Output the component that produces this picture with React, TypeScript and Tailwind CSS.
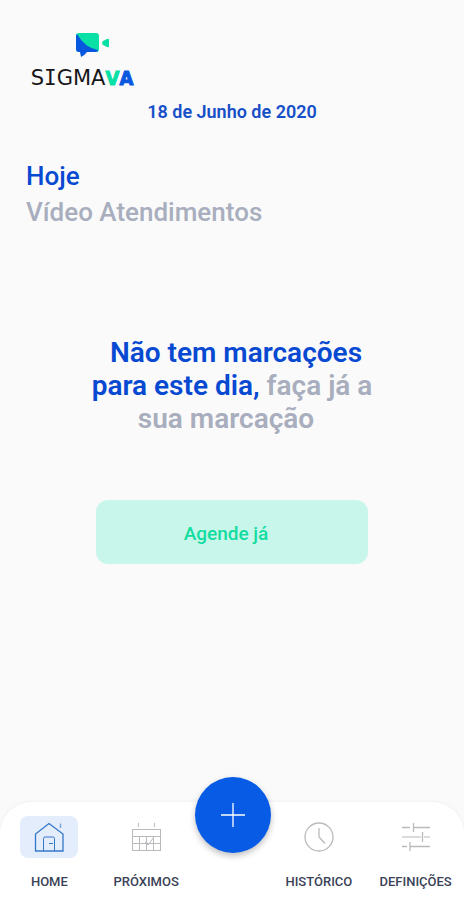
import type { ReactNode } from "react";

function Logo() {
  return (
    <div className="flex w-[108px] flex-col items-center" role="img" aria-label="Sigmava">
      <svg viewBox="0 0 36 26" className="ml-[22px] h-[26px] w-9" aria-hidden="true">
        <rect x="1" y="1" width="23" height="19" rx="3" fill="#08e0a5" />
        <path d="M2 2Q1 3 1 4V17Q1 20 4 20H5L6 25Q9 24 12 20H21Q23 20 23 18Q10 16 2 2Z" fill="#0757df" />
        <path d="M34 8V14Q34 16 32 15L28 13Q26 11 28 9L32 7Q34 6 34 8Z" fill="#08e0a5" />
      </svg>
      <div className="mt-2 flex items-baseline font-['DejaVu_Sans',sans-serif] text-[21px] leading-[24px] text-[#171719]">
        <span>S</span>
        <span className="font-['DejaVu_Sans_Mono',monospace]">I</span>
        <span>GMA</span>
        <span className="flex font-['DejaVu_Sans_Condensed','DejaVu_Sans',sans-serif] text-[20px] font-bold">
          <span className="text-[#08e0a5] [-webkit-text-stroke:1px_#08e0a5]">V</span>
          <span className="text-[#0757df] [-webkit-text-stroke:1px_#0757df]">A</span>
        </span>
      </div>
    </div>
  );
}

function HomeIcon() {
  return (
    <svg viewBox="0 0 32 32" className="size-8" fill="none" stroke="#3478c9" aria-hidden="true">
      <path d="M2.5 30V13L16 2.5L30 13V30Z" strokeWidth="1.3" />
      <path d="M10.5 30V17.5Q10.5 16 12 16H20Q21.5 16 21.5 17.5V30M16 22.5H20" />
      <path d="M27.5 2.5V7" strokeWidth="1.5" opacity=".6" />
    </svg>
  );
}

function CalendarIcon() {
  return (
    <svg viewBox="0 0 32 32" className="size-8" fill="none" stroke="#b8babd" aria-hidden="true">
      <rect x="2.5" y="8.5" width="28" height="21" />
      <path d="M2.5 15.5H30.5M2.5 22.5H30.5M9.5 15.5V29M16.5 15.5V29M23.5 15.5V29M8.5 2V6M24.5 2V6M15 21L18 24L24 16" />
    </svg>
  );
}

function ClockIcon() {
  return (
    <svg viewBox="0 0 32 32" className="size-8" fill="none" stroke="#b8babd" strokeWidth="1.3" aria-hidden="true">
      <circle cx="16" cy="16" r="14" />
      <path d="M16 7V16L22 22.5" />
    </svg>
  );
}

function SlidersIcon() {
  return (
    <svg viewBox="0 0 32 32" className="size-8" fill="none" stroke="#b8babd" strokeWidth="1.3" aria-hidden="true">
      <path d="M2 6.5H10M13.5 6.5H30M13.5 2V11" />
      <path d="M2 16H21M24 16H30" opacity=".7" />
      <path d="M22.5 11V21M2 25.5H7M10 25.5H30M10 21V30" />
    </svg>
  );
}

function NavItem({ label, icon, active = false }: { label: string; icon: ReactNode; active?: boolean }) {
  return (
    <a
      href="#"
      aria-current={active ? "page" : undefined}
      className="flex min-w-0 flex-1 flex-col items-center gap-4 text-[13px] leading-4 font-medium text-[#3a4257]"
    >
      <span className={`flex h-[42px] w-[58px] items-center justify-center rounded-lg ${active ? "bg-[#e4edfc]" : ""}`}>
        {icon}
      </span>
      <span>{label}</span>
    </a>
  );
}

export default function App() {
  return (
    <div className="flex min-h-screen flex-col bg-[#fafafa] font-[Roboto,sans-serif]">
      <header className="px-7 pt-8">
        <Logo />
        <p className="mt-3 text-center text-lg leading-5 font-semibold text-[#174fc8]">18 de Junho de 2020</p>
      </header>

      <main className="flex flex-1 flex-col px-[26px] pt-9">
        <h1 className="text-[26px] leading-9 font-medium">
          <span className="block text-[#0849d2]">Hoje</span>
          <span className="block text-[#a8aebd]">Vídeo Atendimentos</span>
        </h1>

        <section className="mt-[106px] flex flex-col items-center">
          <p className="text-center text-[28px] leading-[33px] font-semibold text-[#a8aebd]">
            <span className="ml-2 text-[#0849d2]">Não tem marcações</span>
            <br />
            <span className="text-[#0849d2]">para este dia,</span> faça já a
            <br />
            <span className="mr-3">sua marcação</span>
          </p>
          <button
            type="button"
            className="mt-[65px] h-16 w-full max-w-[272px] rounded-xl bg-[#c9f6ea] pt-1 pr-3 text-[19px] font-medium text-[#12dda0]"
          >
            Agende já
          </button>
        </section>
      </main>

      <nav className="flex rounded-t-[32px] bg-white pt-[14px] pb-[10px] pl-px shadow-[0_0_4px_rgba(0,0,0,0.06)]">
        <NavItem label="HOME" icon={<HomeIcon />} active />
        <NavItem label="PRÓXIMOS" icon={<CalendarIcon />} />
        <button
          type="button"
          aria-label="Nova marcação"
          className="-mt-[39px] flex size-[76px] shrink-0 items-center justify-center rounded-full bg-[#075be5] shadow-[0_3px_6px_rgba(0,0,0,0.25)]"
        >
          <svg viewBox="0 0 26 26" className="size-[26px]" stroke="white" strokeWidth="1.3" aria-hidden="true">
            <path d="M13 1V25M1 13H25" />
          </svg>
        </button>
        <NavItem label="HISTÓRICO" icon={<ClockIcon />} />
        <NavItem label="DEFINIÇÕES" icon={<SlidersIcon />} />
      </nav>
    </div>
  );
}
